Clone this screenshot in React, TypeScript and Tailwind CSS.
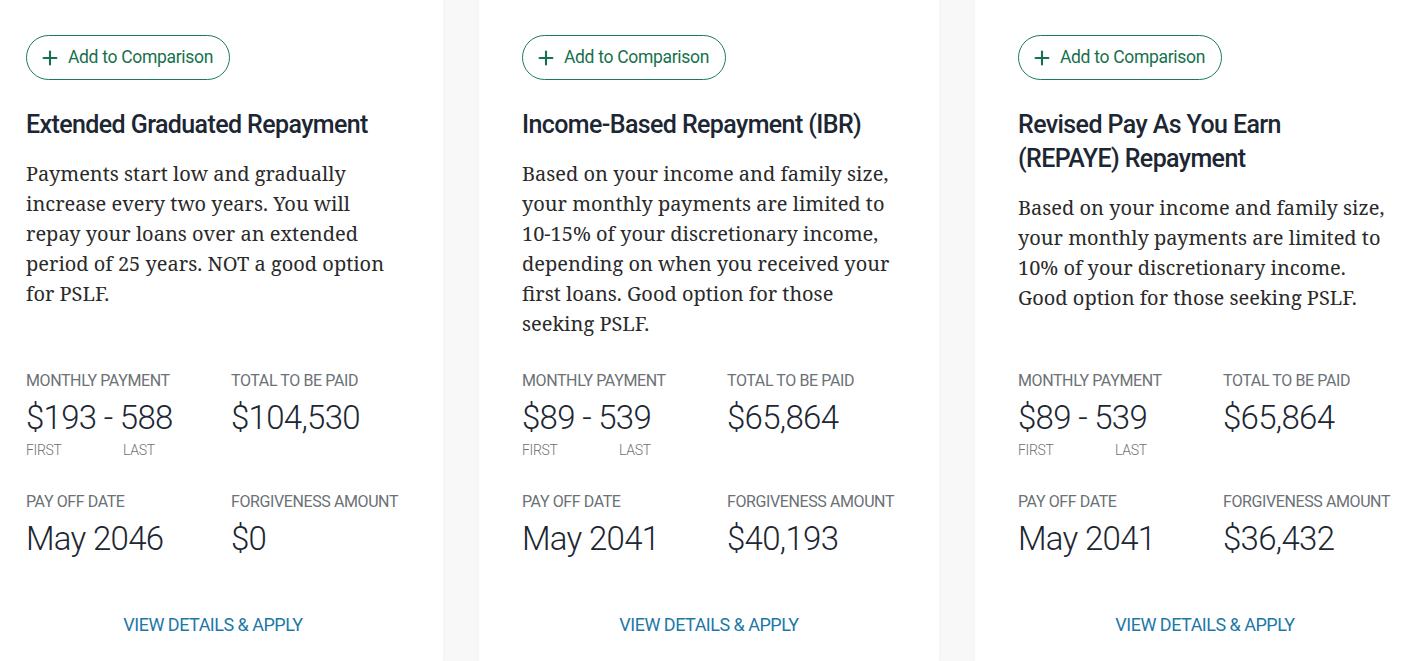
import { Plus } from "lucide-react";

type Plan = {
  title: string;
  body: string;
  first: string;
  last: string;
  total: string;
  payoff: string;
  forgiveness: string;
};

const plans: Plan[] = [
  {
    title: "Extended Graduated Repayment",
    body: "Payments start low and gradually increase every two years. You will repay your loans over an extended period of 25 years. NOT a good option for PSLF.",
    first: "$193",
    last: "588",
    total: "$104,530",
    payoff: "May 2046",
    forgiveness: "$0",
  },
  {
    title: "Income-Based Repayment (IBR)",
    body: "Based on your income and family size, your monthly payments are limited to 10-15% of your discretionary income, depending on when you received your first loans. Good option for those seeking PSLF.",
    first: "$89",
    last: "539",
    total: "$65,864",
    payoff: "May 2041",
    forgiveness: "$40,193",
  },
  {
    title: "Revised Pay As You Earn (REPAYE) Repayment",
    body: "Based on your income and family size, your monthly payments are limited to 10% of your discretionary income. Good option for those seeking PSLF.",
    first: "$89",
    last: "539",
    total: "$65,864",
    payoff: "May 2041",
    forgiveness: "$36,432",
  },
];

const sans = "font-['Roboto','Liberation_Sans',sans-serif]";
const serif = "font-['Noto_Serif','DejaVu_Serif','Liberation_Serif',serif]";

function Stat({ label, value, children }: { label: string; value: string; children?: React.ReactNode }) {
  return (
    <div className="flex flex-col">
      <div className={`${sans} text-[16px] leading-[20px] tracking-[-0.4px] text-[#6b7176] uppercase`}>{label}</div>
      <div className={`${sans} mt-[7px] text-[33px] leading-[40px] tracking-[-0.7px] font-light text-[#1c2733]`}>{value}</div>
      {children}
    </div>
  );
}

function Card({ plan }: { plan: Plan }) {
  return (
    <div className="w-[460px] shrink-0 bg-white px-[43px] pt-[35px] flex flex-col shadow-[0_0_6px_rgba(0,0,0,0.03)]">
      <div className="h-[336px] shrink-0">
        <button className={`${sans} h-[45px] w-[204px] rounded-full border border-[#1e7a57] text-[#17704d] flex items-center justify-center gap-[7px] text-[17.5px] tracking-[-0.3px]`}>
          <Plus size={22} strokeWidth={2.3} className="-ml-[4px]" />
          <span>Add to Comparison</span>
        </button>
        <h2 className={`${sans} mt-[28px] max-w-[352px] text-[25px] leading-[34px] tracking-[-0.6px] font-medium text-[#1c2733]`}>{plan.title}</h2>
        <p className={`${serif} mt-[17px] text-[20px] leading-[30px] text-[#2a2a2a]`}>{plan.body}</p>
      </div>
      <div className="grid grid-cols-[205px_1fr] shrink-0">
        <Stat label="Monthly Payment" value={`${plan.first} - ${plan.last}`}>
          <div className={`${sans} mt-[3px] flex text-[14px] leading-[18px] tracking-[-0.3px] font-light text-[#6b7176]`}>
            <span className="w-[97px]">FIRST</span>
            <span>LAST</span>
          </div>
        </Stat>
        <Stat label="Total to be paid" value={plan.total} />
      </div>
      <div className="grid grid-cols-[205px_1fr] mt-[33px] shrink-0">
        <Stat label="Pay off date" value={plan.payoff} />
        <Stat label="Forgiveness amount" value={plan.forgiveness} />
      </div>
      <a className={`${sans} mt-[54px] text-center text-[18px] leading-[24px] tracking-[-0.5px] text-[#1d78a8] uppercase shrink-0`}>View Details &amp; Apply</a>
    </div>
  );
}

export default function App() {
  return (
    <div className="w-[1421px] h-[661px] overflow-hidden bg-[#f8f8f8]">
      <div className="flex gap-[36px] -ml-[17px] h-full">
        {plans.map((p) => (
          <Card key={p.title} plan={p} />
        ))}
      </div>
    </div>
  );
}
